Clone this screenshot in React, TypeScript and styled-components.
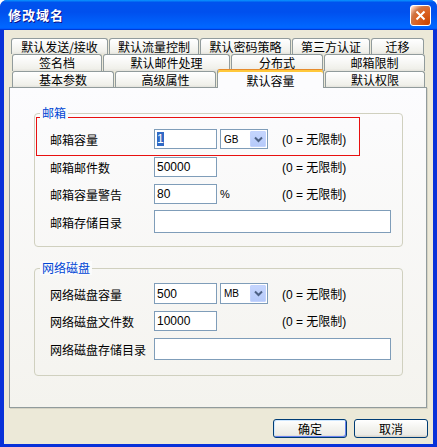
import styled, { createGlobalStyle } from "styled-components";

const GlobalStyle = createGlobalStyle`
  html, body {
    margin: 0;
    padding: 0;
    background: #fff;
  }
  body {
    font-family: "Liberation Sans", "Noto Sans CJK SC", sans-serif;
    font-size: 12px;
    color: #000;
  }
`;

const Window = styled.div`
  width: 437px;
  height: 447px;
  box-sizing: border-box;
  display: flex;
  flex-direction: column;
  background: #0831d9;
  border-radius: 7px 7px 0 0;
  overflow: hidden;
`;

const TitleBar = styled.div`
  height: 30px;
  flex: none;
  display: flex;
  align-items: center;
  justify-content: space-between;
  padding: 0 6px 0 8px;
  background: linear-gradient(180deg, #0997ff, #0053ee 8%, #0050ee 40%, #06f 88%, #06f 93%, #005bff 95%, #003dd7 96%, #003dd7);
`;

const Title = styled.span`
  color: #fff;
  font-family: "Noto Sans CJK SC", sans-serif;
  font-weight: bold;
  font-size: 13px;
  line-height: 16px;
  letter-spacing: 1px;
  text-shadow: 1px 1px #0f1089;
`;

const CloseButton = styled.div`
  width: 21px;
  height: 21px;
  box-sizing: border-box;
  border: 1px solid #fff;
  border-radius: 3px;
  background: radial-gradient(circle at 90% 90%, #cc4600 0%, #dc6527 55%, #cd7546 70%, #ffccb2 90%, #fff 100%);
  display: flex;
  align-items: center;
  justify-content: center;
`;

const Client = styled.div`
  flex: 1;
  margin: 0 4px 3px;
  background: #ece9d8;
  display: flex;
  flex-direction: column;
`;

const Tabs = styled.div`
  padding-top: 8px;
  display: flex;
  flex-direction: column;
`;

const TabRow = styled.div<{ $h: number; $pl: number }>`
  display: flex;
  gap: 1px;
  height: ${(p) => p.$h}px;
  padding-left: ${(p) => p.$pl}px;
`;

const Tab = styled.div<{ $w: number; $active?: boolean }>`
  box-sizing: border-box;
  flex: none;
  width: ${(p) => p.$w}px;
  height: ${(p) => (p.$active ? "calc(100% + 3px)" : "100%")};
  margin-top: ${(p) => (p.$active ? "-2px" : "0")};
  position: ${(p) => (p.$active ? "relative" : "static")};
  z-index: 2;
  border: 1px solid #919b9c;
  border-bottom: none;
  border-top-color: ${(p) => (p.$active ? "#e68b2c" : "#919b9c")};
  border-radius: 3px 3px 0 0;
  background: ${(p) =>
    p.$active
      ? "#fcfcfe"
      : "linear-gradient(#fff, #fafaf9 30%, #f0f0ea 85%, #e4e3dc)"};
  box-shadow: ${(p) => (p.$active ? "inset 0 2px #ffc83c" : "none")};
  padding-top: ${(p) => (p.$active ? "3px" : "0")};
  text-align: center;
  font-family: "Noto Sans CJK SC", sans-serif;
  font-size: 12px;
  line-height: 15px;
  white-space: nowrap;
`;

const Panel = styled.div`
  box-sizing: border-box;
  height: 321px;
  margin: 0 6px 0 5px;
  border: 1px solid #919b9c;
  background: linear-gradient(#fcfcfe, #f4f3ee);
  box-shadow: 1px 1px #d6d3c4;
  padding: 25px 23px 0 24px;
`;

const Group = styled.div<{ $h: number; $pt: number }>`
  position: relative;
  box-sizing: border-box;
  height: ${(p) => p.$h}px;
  border: 1px solid #d0d0bf;
  border-radius: 4px;
  padding-top: ${(p) => p.$pt}px;
  & + & {
    margin-top: 21px;
  }
`;

const Legend = styled.span`
  position: absolute;
  top: -8px;
  left: 5px;
  padding: 0 2px;
  background: #fbfbfb;
  color: #0046d5;
  font-family: "Noto Sans CJK SC", sans-serif;
  font-size: 12px;
  line-height: 14px;
`;

const Highlight = styled.div`
  box-sizing: border-box;
  width: 324px;
  margin: 3px 0 0 1px;
  border: 1px solid #e81010;
  padding: 11px 0 6px;
`;

const Row = styled.div<{ $h?: number; $mt?: number; $pl?: number }>`
  display: flex;
  align-items: center;
  height: ${(p) => p.$h ?? 20}px;
  margin-top: ${(p) => p.$mt ?? 0}px;
  padding-left: ${(p) => p.$pl ?? 15}px;
`;

const Label = styled.span`
  flex: none;
  width: 104px;
  font-family: "Noto Sans CJK SC", sans-serif;
  line-height: 14px;
  padding-top: 2px;
`;

const TextBox = styled.div<{ $w?: number }>`
  box-sizing: border-box;
  flex: none;
  width: ${(p) => p.$w ?? 63}px;
  height: 100%;
  border: 1px solid #7f9db9;
  background: #fff;
  padding: 0 2px;
  display: flex;
  align-items: center;
  line-height: 14px;
`;

const Selected = styled.span`
  background: #316ac5;
  color: #fff;
`;

const Unit = styled.div`
  flex: none;
  width: 48px;
  margin-left: 3px;
  height: 100%;
  display: flex;
  align-items: center;
  font-size: 11px;
`;

const Select = styled.div`
  box-sizing: border-box;
  width: 100%;
  height: 100%;
  border: 1px solid #7f9db9;
  background: #fff;
  display: flex;
  align-items: stretch;
  justify-content: space-between;
`;

const SelectText = styled.span`
  padding-left: 3px;
  font-size: 10px;
  display: flex;
  align-items: center;
`;

const DropButton = styled.div`
  width: 16px;
  margin: 1px;
  box-sizing: border-box;
  border: 1px solid #c3d3fd;
  border-radius: 1px;
  background: linear-gradient(#c5d5fd, #b6cafa);
  display: flex;
  align-items: center;
  justify-content: center;
`;

const Note = styled.span`
  margin-left: 14px;
  line-height: 14px;
  white-space: nowrap;
  padding-top: 2px;
`;

const Footer = styled.div`
  display: flex;
  justify-content: flex-end;
  gap: 7px;
  padding: 11px 5px 0 0;
`;

const Button = styled.button<{ $default?: boolean }>`
  width: 74px;
  height: 19px;
  box-sizing: border-box;
  padding: 0;
  border: 1px solid #003c74;
  border-radius: 3px;
  background: linear-gradient(#fff, #f4f4f0 45%, #ecebe6 86%, #d6d0c5);
  box-shadow: ${(p) =>
    p.$default ? "inset 1px 1px #cee7ff, inset -1px -1px #6982ee" : "none"};
  font-family: "Noto Sans CJK SC", sans-serif;
  font-size: 12px;
  line-height: 15px;
  color: #000;
`;

const Chevron = () => (
  <svg width="9" height="7" viewBox="0 0 9 7">
    <polyline points="1,1.5 4.5,5 8,1.5" fill="none" stroke="#4d6185" strokeWidth="2" />
  </svg>
);

const UnitSelect = ({ value }: { value: string }) => (
  <Unit>
    <Select>
      <SelectText>{value}</SelectText>
      <DropButton>
        <Chevron />
      </DropButton>
    </Select>
  </Unit>
);

const note = "(0 = 无限制)";

export default function App() {
  return (
    <>
      <GlobalStyle />
      <Window>
        <TitleBar>
          <Title>修改域名</Title>
          <CloseButton>
            <svg width="11" height="11" viewBox="0 0 11 11">
              <path d="M1.5 1.5 L9.5 9.5 M9.5 1.5 L1.5 9.5" stroke="#fff" strokeWidth="2" />
            </svg>
          </CloseButton>
        </TitleBar>
        <Client>
          <Tabs>
            <TabRow $h={16} $pl={7}>
              <Tab $w={97}>默认发送/接收</Tab>
              <Tab $w={90}>默认流量控制</Tab>
              <Tab $w={91}>默认密码策略</Tab>
              <Tab $w={78}>第三方认证</Tab>
              <Tab $w={53}>迁移</Tab>
            </TabRow>
            <TabRow $h={17} $pl={8}>
              <Tab $w={90}>签名档</Tab>
              <Tab $w={127}>默认邮件处理</Tab>
              <Tab $w={92}>分布式</Tab>
              <Tab $w={101}>邮箱限制</Tab>
            </TabRow>
            <TabRow $h={16} $pl={8}>
              <Tab $w={102}>基本参数</Tab>
              <Tab $w={101}>高级属性</Tab>
              <Tab $w={107} $active>默认容量</Tab>
              <Tab $w={100}>默认权限</Tab>
            </TabRow>
          </Tabs>
          <Panel>
            <Group $h={134} $pt={0}>
              <Legend>邮箱</Legend>
              <Highlight>
                <Row $pl={13}>
                  <Label>邮箱容量</Label>
                  <TextBox>
                    <Selected>1</Selected>
                  </TextBox>
                  <UnitSelect value="GB" />
                  <Note>{note}</Note>
                </Row>
              </Highlight>
              <Row $mt={1}>
                <Label>邮箱邮件数</Label>
                <TextBox>50000</TextBox>
                <Unit />
                <Note>{note}</Note>
              </Row>
              <Row $mt={7}>
                <Label>邮箱容量警告</Label>
                <TextBox>80</TextBox>
                <Unit>%</Unit>
                <Note>{note}</Note>
              </Row>
              <Row $mt={6} $h={23}>
                <Label>邮箱存储目录</Label>
                <TextBox $w={237} />
              </Row>
            </Group>
            <Group $h={108} $pt={14}>
              <Legend>网络磁盘</Legend>
              <Row $h={21}>
                <Label>网络磁盘容量</Label>
                <TextBox>500</TextBox>
                <UnitSelect value="MB" />
                <Note>{note}</Note>
              </Row>
              <Row $mt={7}>
                <Label>网络磁盘文件数</Label>
                <TextBox>10000</TextBox>
                <Unit />
                <Note>{note}</Note>
              </Row>
              <Row $mt={7} $h={22}>
                <Label>网络磁盘存储目录</Label>
                <TextBox $w={237} />
              </Row>
            </Group>
          </Panel>
          <Footer>
            <Button $default>确定</Button>
            <Button>取消</Button>
          </Footer>
        </Client>
      </Window>
    </>
  );
}
